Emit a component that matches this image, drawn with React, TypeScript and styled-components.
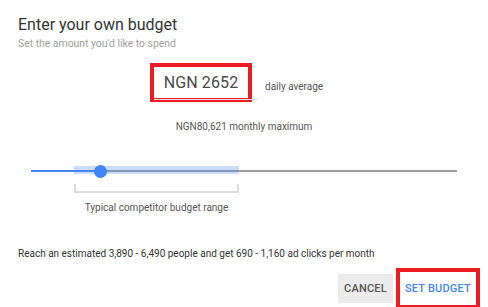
import React from "react";
import styled, { createGlobalStyle } from "styled-components";

const GlobalStyle = createGlobalStyle`
  html, body {
    margin: 0;
    padding: 0;
    background: #fff;
  }
  body {
    font-family: Roboto, "Liberation Sans", Arial, sans-serif;
    color: #212121;
  }
`;

const SDialog = styled.div`
  width: 488px;
  height: 307px;
  box-sizing: border-box;
  display: flex;
  flex-direction: column;
  overflow: hidden;
`;

const SHeader = styled.div`
  padding: 14px 18px 0;
`;

const STitle = styled.h2`
  margin: 0;
  font-size: 16px;
  line-height: 22px;
  font-weight: 400;
  color: #333;
`;

const SSubtitle = styled.p`
  margin: 1px 0 0;
  font-size: 10.4px;
  line-height: 13px;
  color: #9e9e9e;
`;

const SInputRow = styled.div`
  display: flex;
  align-items: center;
  padding-left: 150px;
  margin-top: 13px;
`;

const SHighlight = styled.div`
  border: 4px solid #ed1c24;
  box-sizing: border-box;
`;

const SInputBox = styled(SHighlight)`
  width: 102px;
  height: 39px;
  display: flex;
  align-items: center;
  justify-content: center;
  position: relative;
  &::after {
    content: "";
    position: absolute;
    left: 0;
    right: -10px;
    bottom: -2px;
    height: 1px;
    background: #e0e0e0;
  }
`;

const SAmount = styled.span`
  font-size: 16px;
  color: #4a4a4a;
  letter-spacing: 0.1px;
`;

const SSuffix = styled.span`
  margin-left: 13px;
  margin-top: 8px;
  font-size: 10px;
  color: #555;
`;

const SMonthly = styled.p`
  margin: 18px 0 0;
  text-align: center;
  font-size: 10px;
  line-height: 13px;
  color: #555;
`;

const SSliderArea = styled.div`
  margin: 37px 31px 0;
`;

const STrack = styled.div`
  position: relative;
  height: 2px;
  background: #9e9e9e;
`;

const SFill = styled.div`
  position: absolute;
  left: 0;
  top: 0;
  height: 2px;
  background: #4285f4;
`;

const SRange = styled.div`
  position: absolute;
  top: -4px;
  height: 8px;
  background: rgba(66, 133, 244, 0.28);
`;

const SThumb = styled.div`
  position: absolute;
  top: -5.5px;
  width: 13px;
  height: 13px;
  margin-left: -6.5px;
  border-radius: 50%;
  background: #4285f4;
`;

const SBracket = styled.div`
  margin-top: 12px;
  height: 7px;
  border: 2px solid #ddd;
  border-top: none;
`;

const SRangeLabel = styled.p`
  margin: 8px 0 0;
  text-align: center;
  font-size: 10px;
  line-height: 13px;
  color: #555;
`;

const SReach = styled.p`
  margin: 33px 18px 0;
  font-size: 10px;
  line-height: 13px;
  color: #333;
`;

const SActions = styled.div`
  margin-top: auto;
  margin-bottom: -2px;
  display: flex;
  justify-content: flex-end;
  align-items: center;
  gap: 3px;
  padding-right: 8px;
`;

const SButton = styled.button<{ primary?: boolean }>`
  font-family: inherit;
  font-size: 11px;
  font-weight: 500;
  letter-spacing: 0.2px;
  text-transform: uppercase;
  border: none;
  cursor: pointer;
  padding: 0;
  color: ${({ primary }) => (primary ? "#4285f4" : "#555")};
  background: ${({ primary }) => (primary ? "#fff" : "#ebebeb")};
  height: 29px;
  width: 55px;
`;

const SPrimaryWrap = styled(SHighlight)`
  width: 84px;
  height: 41px;
  display: flex;
  align-items: center;
  justify-content: center;
`;

const SPrimaryButton = styled(SButton)`
  width: auto;
`;

const sliderWidth = 426;
const range = { from: 43, to: 208 };
const thumbAt = 69;

export default function App() {
  return (
    <SDialog>
      <GlobalStyle />
      <SHeader>
        <STitle>Enter your own budget</STitle>
        <SSubtitle>Set the amount you'd like to spend</SSubtitle>
      </SHeader>
      <SInputRow>
        <SInputBox>
          <SAmount>NGN 2652</SAmount>
        </SInputBox>
        <SSuffix>daily average</SSuffix>
      </SInputRow>
      <SMonthly>NGN80,621 monthly maximum</SMonthly>
      <SSliderArea>
        <STrack>
          <SRange style={{ left: range.from, width: range.to - range.from }} />
          <SFill style={{ width: thumbAt }} />
          <SThumb style={{ left: thumbAt }} />
        </STrack>
        <div style={{ width: sliderWidth }}>
          <div style={{ marginLeft: range.from, width: range.to - range.from }}>
            <SBracket />
            <SRangeLabel>Typical competitor budget range</SRangeLabel>
          </div>
        </div>
      </SSliderArea>
      <SReach>
        Reach an estimated 3,890 - 6,490 people and get 690 - 1,160 ad clicks per month
      </SReach>
      <SActions>
        <SButton>Cancel</SButton>
        <SPrimaryWrap>
          <SPrimaryButton primary>Set budget</SPrimaryButton>
        </SPrimaryWrap>
      </SActions>
    </SDialog>
  );
}
